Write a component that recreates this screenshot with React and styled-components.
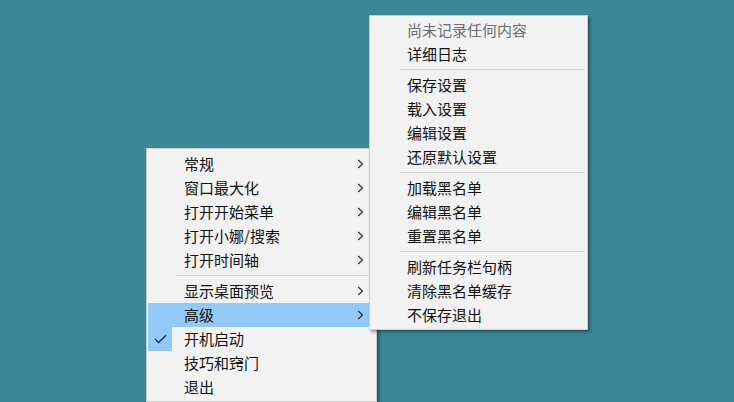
import styled, { createGlobalStyle } from 'styled-components'

const GlobalStyle = createGlobalStyle`
  html, body {
    margin: 0;
    padding: 0;
    background: #3b8899;
  }
`

const Desktop = styled.div`
  position: relative;
  width: 734px;
  height: 402px;
  overflow: hidden;
  background: #3b8899;
  font-family: "Noto Sans CJK SC", "Noto Sans", sans-serif;
`

const Menu = styled.div`
  position: absolute;
  left: ${(props) => props.$left}px;
  top: ${(props) => props.$top}px;
  width: ${(props) => props.$width}px;
  box-sizing: border-box;
  display: flex;
  flex-direction: column;
  padding: ${(props) => props.$padTop}px 1px 2px 1px;
  background: #f2f2f2;
  border: 1px solid #cdcdcd;
  box-shadow: 2px 2px 3px rgba(0, 0, 0, 0.4);
`

const Item = styled.div`
  display: grid;
  grid-template-columns: 24px 1fr 7px;
  align-items: center;
  height: 24px;
  padding-right: 11px;
  background: ${(props) => (props.$active ? '#91c9f7' : 'transparent')};
  color: ${(props) => (props.$disabled ? '#6d6d6d' : '#111')};
  font-size: 15px;
  line-height: 24px;
  white-space: nowrap;
`

const CheckCell = styled.div`
  display: flex;
  align-items: center;
  justify-content: center;
  height: 24px;
  background: ${(props) => (props.$checked ? '#91c9f7' : 'transparent')};
`

const Label = styled.span`
  padding-left: 12px;
`

const Separator = styled.div`
  height: 1px;
  margin: 3px 1px 3px 28px;
  background: #d7d7d7;
`

const Chevron = () => (
  <svg width="7" height="10" viewBox="0 0 7 10">
    <polyline points="1.2,1 5.5,5 1.2,9" fill="none" stroke="#2b2b2b" strokeWidth="1.2" />
  </svg>
)

const Check = () => (
  <svg width="13" height="10" viewBox="0 0 13 10">
    <polyline points="1,5 4.6,8.6 12,1.2" fill="none" stroke="#1d3553" strokeWidth="1.4" />
  </svg>
)

const MenuItem = ({ label, sub, active, checked, disabled }) => (
  <Item $active={active} $disabled={disabled}>
    <CheckCell $checked={checked}>{checked && <Check />}</CheckCell>
    <Label>{label}</Label>
    {sub ? <Chevron /> : <span />}
  </Item>
)

const mainMenu = [
  { label: '常规', sub: true },
  { label: '窗口最大化', sub: true },
  { label: '打开开始菜单', sub: true },
  { label: '打开小娜/搜索', sub: true },
  { label: '打开时间轴', sub: true },
  'sep',
  { label: '显示桌面预览', sub: true },
  { label: '高级', sub: true, active: true },
  { label: '开机启动', checked: true },
  { label: '技巧和窍门' },
  { label: '退出' }
]

const advancedMenu = [
  { label: '尚未记录任何内容', disabled: true },
  { label: '详细日志' },
  'sep',
  { label: '保存设置' },
  { label: '载入设置' },
  { label: '编辑设置' },
  { label: '还原默认设置' },
  'sep',
  { label: '加载黑名单' },
  { label: '编辑黑名单' },
  { label: '重置黑名单' },
  'sep',
  { label: '刷新任务栏句柄' },
  { label: '清除黑名单缓存' },
  { label: '不保存退出' }
]

const renderItems = (items) =>
  items.map((item, i) =>
    item === 'sep' ? <Separator key={i} /> : <MenuItem key={i} {...item} />
  )

const App = () => {
  return (
    <>
      <GlobalStyle />
      <Desktop>
        <Menu $left={146} $top={148} $width={231} $padTop={3}>
          {renderItems(mainMenu)}
        </Menu>
        <Menu $left={369} $top={15} $width={219} $padTop={2}>
          {renderItems(advancedMenu)}
        </Menu>
      </Desktop>
    </>
  )
}

export default App
